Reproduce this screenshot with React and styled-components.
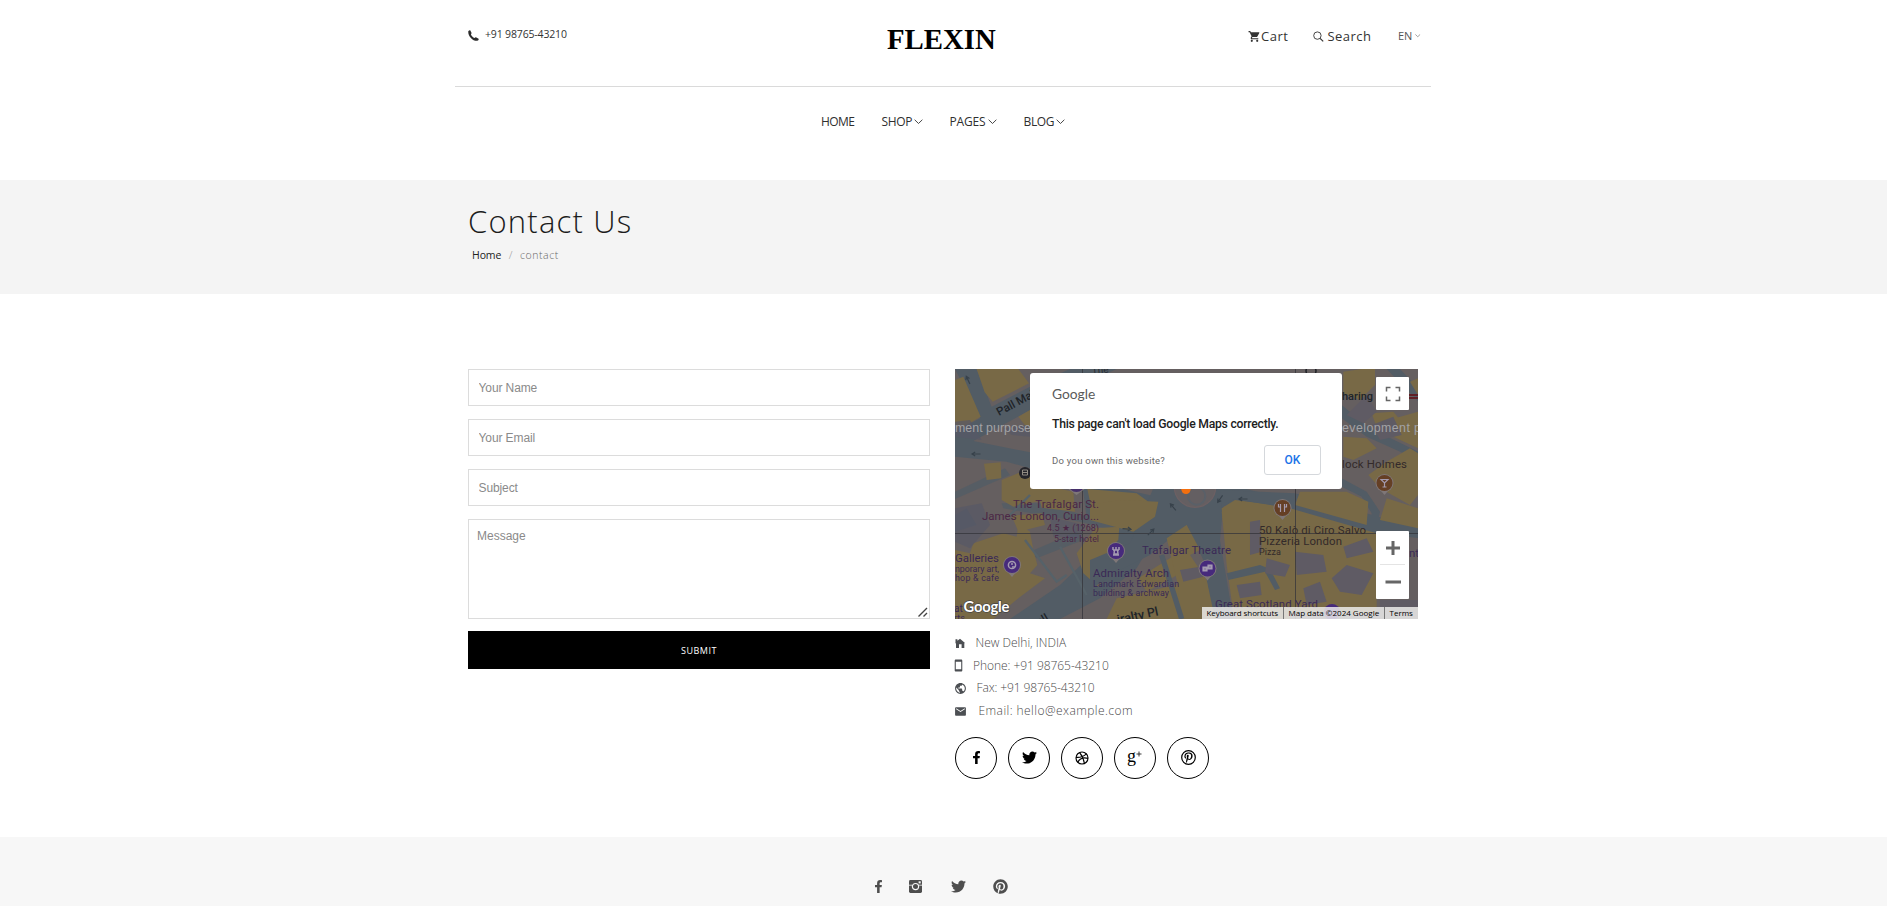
import React from "react";
import styled, { createGlobalStyle } from "styled-components";
import { MdShoppingCart, MdSmartphone, MdPublic, MdEmail } from "react-icons/md";
import { FaFacebookF, FaTwitter, FaPinterest, FaPinterestP } from "react-icons/fa";

const GlobalStyle = createGlobalStyle`
  * { box-sizing: border-box; }
  body {
    margin: 0;
    background: #fff;
    color: #333;
    font-family: "Open Sans", "Noto Sans", sans-serif;
    overflow: hidden;
  }
`;

const Page = styled.div`
  height: 906px;
  display: flex;
  flex-direction: column;
  overflow: hidden;
`;

const Container = styled.div`
  width: 951px;
  margin: 0 auto;
`;

const Txt = styled.span`
  font-size: ${(p) => p.$size || 12}px;
  font-weight: ${(p) => p.$weight || 400};
  letter-spacing: ${(p) => p.$ls || 0}px;
  color: ${(p) => p.$color || "inherit"};
  line-height: 16px;
  white-space: nowrap;
`;

/* ---------- header ---------- */

const Header = styled.header`
  height: 180px;
`;

const TopBar = styled.div`
  display: grid;
  grid-template-columns: 1fr 109px 1fr;
  height: 86px;
  align-items: start;
`;

const Phone = styled.div`
  display: flex;
  align-items: center;
  gap: 6px;
  padding-top: 26px;
  svg { margin-top: 3px; }
`;

const Logo = styled.div`
  padding-top: 23px;
  margin-left: -2px;
  font: 700 28.8px/33px "Liberation Serif", "Times New Roman", serif;
  color: #000;
  white-space: nowrap;
`;

const Tools = styled.div`
  justify-self: end;
  display: grid;
  grid-template-columns: 13px 51.5px 15px 70.5px 17px 6px;
  align-items: center;
  padding-top: 28px;
  margin-right: -2px;
`;

const Divider = styled.div`
  height: 1px;
  margin: 0 -12px 0 -13px;
  background: #dadada;
`;

const Nav = styled.nav`
  display: flex;
  padding: 27px 0 0 353px;
`;

const NavItem = styled.a`
  display: flex;
  align-items: center;
  gap: 2px;
  width: ${(p) => p.$w}px;
  color: #2f2f2f;
`;

/* ---------- title band ---------- */

const Band = styled.section`
  height: 114px;
  background: #f4f4f4;
`;

const Title = styled.h1`
  margin: 0;
  padding-top: 20px;
  font-size: 31px;
  font-weight: 300;
  line-height: 42px;
  letter-spacing: 1.2px;
  color: #1c1c1c;
`;

const Crumbs = styled.div`
  display: flex;
  gap: 7.5px;
  padding: 5px 0 0 4px;
`;

/* ---------- contact ---------- */

const Contact = styled(Container)`
  display: grid;
  grid-template-columns: 462px 463px;
  column-gap: 25px;
  padding-top: 75px;
  height: 543px;
`;

const Form = styled.form`
  display: flex;
  flex-direction: column;
  gap: 13px;
`;

const Input = styled.input`
  height: 37px;
  width: 100%;
  padding: 0 9.5px;
  border: 1px solid #dcdcdc;
  outline: 0;
  font: 12px "Liberation Sans", Arial, sans-serif;
  letter-spacing: -0.1px;
  &::placeholder { color: #8a8a8a; }
`;

const MessageBox = styled.div`
  position: relative;
  height: 100px;
  svg { position: absolute; right: 2px; bottom: 2px; }
`;

const Message = styled.textarea`
  display: block;
  height: 100px;
  width: 100%;
  padding: 9px 8px;
  border: 1px solid #dcdcdc;
  outline: 0;
  resize: none;
  font: 12px "Liberation Sans", Arial, sans-serif;
  &::placeholder { color: #8a8a8a; }
`;

const Submit = styled.button`
  height: 38px;
  margin-top: -1px;
  border: 0;
  background: #000;
  color: #fff;
  font: 500 9px "Open Sans", sans-serif;
  letter-spacing: 0.5px;
`;

/* ---------- map ---------- */

const MapFrame = styled.div`
  position: relative;
  height: 250px;
  overflow: hidden;
  background: #66605f;
  > svg { display: block; }
`;

const Dialog = styled.div`
  position: absolute;
  left: 75px;
  top: 4px;
  width: 312px;
  height: 116px;
  padding: 13px 21px 0 22px;
  border-radius: 3px;
  background: #fff;
  font-family: Roboto, sans-serif;
`;

const DialogBrand = styled.div`
  font: 400 13.8px/16px Lato, sans-serif;
  color: #5a5a5a;
`;

const DialogText = styled.div`
  padding-top: 14px;
  font-size: 12.2px;
  font-weight: 500;
  line-height: 17px;
  letter-spacing: -0.24px;
  color: #212121;
  white-space: nowrap;
`;

const DialogFoot = styled.div`
  display: flex;
  justify-content: space-between;
  align-items: center;
  padding-top: 12px;
  font-size: 9.5px;
  letter-spacing: 0.26px;
  color: #6a6a6a;
`;

const OkButton = styled.button`
  width: 57px;
  height: 30px;
  border: 1px solid #d5d8dc;
  border-radius: 3px;
  background: #fff;
  color: #1a73e8;
  font: 500 12px Roboto, sans-serif;
`;

const Fullscreen = styled.div`
  position: absolute;
  left: 421px;
  top: 8px;
  width: 33px;
  height: 33px;
  background: #fff;
  border-radius: 1px;
`;

const ZoomBox = styled.div`
  position: absolute;
  left: 421px;
  top: 162px;
  width: 33px;
  height: 68px;
  background: #fff;
  border-radius: 1px;
`;

const Attribution = styled.div`
  position: absolute;
  right: 0;
  bottom: 0;
  height: 12px;
  display: flex;
  background: rgba(240, 240, 240, 0.82);
  color: #000;
`;

const Credit = styled.span`
  width: ${(p) => p.$w}px;
  padding-left: 4.5px;
  border-left: ${(p) => (p.$first ? "0" : "1px solid #777")};
  font-size: 8px;
  line-height: 12px;
  white-space: nowrap;
  letter-spacing: ${(p) => (p.$first ? -0.08 : 0)}px;
`;

/* ---------- details ---------- */

const Details = styled.ul`
  list-style: none;
  margin: 0;
  padding: 13px 0 0;
  color: #4a4a4a;
`;

const Detail = styled.li`
  display: grid;
  grid-template-columns: ${(p) => p.$indent}px auto;
  align-items: center;
  height: 22.6px;
  svg { width: 13px; height: 13px; margin-left: ${(p) => p.$pull || -1}px; color: #4c4f53; }
`;

const Socials = styled.div`
  display: flex;
  gap: 11px;
  padding-top: 14.6px;
`;

const Circle = styled.a`
  width: 42px;
  height: 42px;
  border: 1px solid #000;
  border-radius: 50%;
  display: flex;
  align-items: center;
  justify-content: center;
  color: #000;
`;

const GPlus = styled.span`
  display: flex;
  font: 18px/18px "Liberation Serif", serif;
  margin: -4px 0 0 -1px;
  svg { margin: 4px 0 0 0; }
`;

const Footer = styled.footer`
  flex: 1;
  display: grid;
  grid-template-columns: 37px 41.5px 42.5px 16px;
  align-items: start;
  padding: 41px 0 0 872px;
  background: #f7f7f7;
  color: #4e4e4e;
`;

const Centered = styled.span`
  display: flex;
  align-items: center;
  height: 16px;
`;

/* ---------- drawings ---------- */

const Caret = ({ s = 9, c = "#333" }) => (
  <svg width={s} height={s * 0.6} viewBox="0 0 10 6" fill="none" stroke={c} strokeWidth="1">
    <path d="M0.7 0.8 5 5 9.3 0.8" />
  </svg>
);

const Handset = () => (
  <svg width="11" height="11" viewBox="0 0 11 11" fill="#2c2c2c">
    <path d="M0.300 1.200C0.800 0.400 1.600 0 2.200 0.200L3.600 2.900C3.700 3.400 3.100 3.900 2.900 4.200C3.400 5.900 4.900 7.400 6.600 8.100C7 7.800 7.400 7.200 7.900 7.300L10.600 8.800C10.900 9.400 10.300 10.400 9.300 10.800C4.500 11.100 -0.200 6 0.300 1.200Z" />
  </svg>
);

const House = () => (
  <svg viewBox="0 0 13 13" fill="currentColor">
    <path d="M1.500 2.200H3.400V3.800L6 1.800 11 6 10.300 6.300V11H7.600V7.300H5V11H2V6.300H1.200L1.500 5.400Z" />
  </svg>
);

const Magnifier = () => (
  <svg width="11" height="11" viewBox="0 0 11 11" fill="none" stroke="#333">
    <circle cx="4.4" cy="4.6" r="3.7" strokeWidth=".9" />
    <path d="M7.100 7.300 10.200 10.400" strokeWidth="1.2" />
  </svg>
);

const Grip = () => (
  <svg width="10" height="10" stroke="#444" strokeWidth="1.4">
    <path d="M0.500 9.500 9 1M5.500 9.500 9 6" />
  </svg>
);

const Instagram = () => (
  <svg width="13" height="13" viewBox="0 0 13 13">
    <rect width="13" height="13" rx="1.4" fill="currentColor" />
    <path d="M0 5.2H3.4M9.6 5.2H13" stroke="#f7f7f7" strokeWidth=".8" />
    <circle cx="6.5" cy="6.6" r="3.1" fill="none" stroke="#f7f7f7" strokeWidth="1.2" />
    <rect x="9.6" y="1.3" width="2.1" height="2.1" fill="#f7f7f7" />
  </svg>
);

const Ball = () => (
  <svg width="14" height="14" viewBox="0 0 14 14" fill="none" stroke="currentColor" strokeWidth="1.15">
    <circle cx="7" cy="7" r="6" />
    <path d="M1 6.4C5 6.6 9 5.4 11.4 2.9M4.6 1.6C7 4.4 8.7 8 9.4 12.4M2.8 11.2C4.6 7.8 8.4 6.2 13 7.4" />
  </svg>
);

const PlusMark = () => (
  <svg width="6" height="6" viewBox="0 0 6 6" stroke="#222" strokeWidth=".9">
    <path d="M0.500 3H5.500M3 0.500V5.500" />
  </svg>
);

const PinRing = () => (
  <svg width="15" height="15" viewBox="0 0 15 15">
    <circle cx="7.5" cy="7.5" r="6.8" fill="none" stroke="currentColor" strokeWidth="1.2" />
    <FaPinterestP x="2" y="2.200" size={11} />
  </svg>
);

const Y = "#786946";
const R = "#525c65";
const G = "#655f60";
const P = "#3a2956";

const Pin = ({ x, y, fill, children }) => (
  <g transform={`translate(${x} ${y})`}>
    <path d="M-8.5 2 0 12 8.5 2Z" fill="#7f7778" />
    <circle r="9" fill="#7f7778" />
    <circle r="8" fill={fill} />
    <g fill="none" stroke="#a49bb0" strokeWidth="1.5">{children}</g>
  </g>
);

const Arrow = ({ x, y, a }) => (
  <path
    transform={`translate(${x} ${y}) rotate(${a})`}
    d="M-4.500 0H4M0.8 -2 4 0 0.8 2"
    fill="none"
    stroke="#38424b"
    strokeWidth="1.2"
  />
);

const MapDrawing = () => (
  <svg width="463" height="250" viewBox="0 0 463 250" fontFamily="Roboto, sans-serif">
    <rect width="463" height="250" fill={G} />
    {/* western blocks */}
    <g transform="translate(-5 -4) scale(.33333)">
      <g fill={R}>
        <path d="M15 12H80L125 125 240 65 360 12H500L250 130 70 228 240 262 400 345 640 400 660 440 560 610 450 700 330 762H180L330 660 440 555 500 480 410 462 400 380 240 310 170 290 15 275V200L90 160Z" />
        <path d="M15 380 165 310 180 330 15 402ZM155 415H280L400 450 540 485 520 505 390 470 160 430ZM240 560 380 500 400 525 260 580ZM15 450 50 430 80 480 15 500Z" opacity=".8" />
      </g>
      <g fill={Y}>
        <path d="M15 45 40 35 92 155 40 185 15 190ZM80 12H205L237 55 128 110 104 82ZM205 155 240 135V200ZM102 296 152 292 154 340 110 345ZM155 345 235 312 300 365 370 380 375 440 275 428 270 408 190 425 155 405Z" />
        <path d="M412 372 560 385 622 430 580 478 430 456ZM185 452 275 445 285 480 205 500ZM15 555 60 565 70 535 160 505 200 515 205 475 240 500 250 555 262 600 240 625 285 640 205 700 130 762H15ZM380 565 435 490 508 485 505 525 470 560 505 570 470 630 445 665 400 625ZM500 700 720 650V762H470ZM565 640 690 560 700 620 590 680Z" />
      </g>
      <g fill="#575967">
        <path d="M15 170 60 165 95 225 15 215ZM160 190 240 180V215L185 210ZM15 430 95 415 120 480 60 550 15 530ZM300 455 400 480 395 520 310 515Z" opacity=".7" />
      </g>
      <path d="M330 545 410 690M225 525 320 650 350 630M240 390 180 450" fill="none" stroke="#566269" strokeWidth="7" />
    </g>
    {/* roundabout and theatre block */}
    <g transform="translate(135 111) scale(.33333)">
      <path d="M190 25H460L600 60V130L400 75 390 180 430 417H370L340 240 290 135 180 225 90 270 0 330V240L120 190Z" fill={R} />
      <path d="M0 75 90 60 205 65 195 110 130 155 0 120ZM230 175 290 135 330 210 300 225 350 300 375 417H270L265 320ZM395 95 450 65 600 115V417H440L420 310Z" fill={Y} />
      <path d="M445 145 520 135 510 190 460 195ZM470 300 540 290 550 350 490 355ZM270 270 330 260 340 290 280 305Z" fill="#5f5b63" />
      <circle cx="315" cy="20" r="62" fill="#645f62" stroke="#6c6063" strokeWidth="4" />
      <circle cx="320" cy="48" r="26" fill="none" stroke="#5a6068" strokeWidth="6" />
      <circle cx="288" cy="28" r="14" fill="#f36f0f" />
      <path d="M215 225 275 417" stroke={R} strokeWidth="16" />
    </g>
    {/* eastern blocks */}
    <g transform="translate(225 -4) scale(.33333)">
      <path d="M125 430 165 405 320 425 590 500V745H160L140 600Z" fill={Y} />
      <g fill={R}>
        <path d="M120 375 345 385 720 490V520L590 505 330 430 160 402 125 430ZM485 120 570 190 715 260V285L560 215 485 160ZM485 340 560 380 600 440 590 490 570 490 575 445 545 395 485 365ZM620 12H660L715 70V110Z" />
        <path d="M140 625 240 600 270 612 300 670 285 675 255 620 145 645Z" />
      </g>
      <g fill={Y}>
        <path d="M490 20 545 12H585V60L540 105 490 85ZM575 145 640 140 665 170 600 215ZM645 160 714 140V250L640 215ZM490 215 560 220 590 250 520 285 490 275ZM620 290 690 250 714 265V390L690 420 600 370 565 330ZM360 380H500L565 410 560 480 345 420ZM620 400 714 430V490L600 465ZM690 50 714 40V90Z" />
      </g>
      <g fill="#5f5b64">
        <path d="M210 470 240 465 245 560 210 570ZM345 560 430 570 440 620 350 630ZM455 640 500 600 580 625 545 690 480 680ZM260 580 330 600 315 635 255 625ZM170 660 240 650 245 690 180 700ZM370 670 420 650 440 710 380 720ZM500 150 560 90 590 140 550 175ZM575 180 640 155 665 210 600 225ZM490 545 560 520 580 560 500 580ZM600 705H714V727H600Z" />
      </g>
    </g>
    <path d="M127.5 0V250M340.5 0V250M0 164.5H463" stroke="#34343a" strokeWidth="1" opacity=".75" />
    <Arrow x={13} y={11} a={-115} />
    <Arrow x={21} y={85} a={180} />
    <Arrow x={218} y={138} a={-130} />
    <Arrow x={172} y={160} a={5} />
    <Arrow x={196} y={163} a={-45} />
    <Arrow x={265} y={130} a={125} />
    <Arrow x={288} y={130} a={180} />
    <g fill="#a3a3a6" fontSize="12.4" fontFamily="Liberation Sans, sans-serif">
      <text x="0" y="63" textLength="76">ment purpose</text>
      <text x="387" y="63" textLength="79">evelopment p</text>
    </g>
    <g fontWeight="500" fill="#202429" fontSize="11.5">
      <text x="44" y="47" transform="rotate(-28 44 47)">Pall Mall</text>
      <text x="163" y="255" fontSize="12.5" transform="rotate(-12 163 255)">iralty Pl</text>
      <text x="84" y="257" transform="rotate(-30 84 257)">all</text>
      <text x="387" y="31" fontSize="11">haring</text>
    </g>
    <text x="137" y="5" fontSize="10" fill="#292d32" transform="rotate(-5 137 5)">The</text>
    <circle cx="70" cy="104" r="6" fill="#24242a" />
    <path d="M67.5 101H72.5V106H67.5ZM67.5 103.5H72.5" stroke="#918b83" fill="none" />
    <circle cx="356" cy="2" r="5" fill="none" stroke="#202127" strokeWidth="1.5" />
    <path d="M454 26H463M454 29H463" stroke="#611f25" strokeWidth="2" />
    <g fill="#4b2846" textAnchor="end" fontSize="11.4">
      <text x="144" y="139" textLength="86">The Trafalgar St.</text>
      <text x="144" y="151" textLength="117">James London, Curio...</text>
      <text x="144" y="162" fontSize="9" textLength="52">4.5 ★ (1268)</text>
      <text x="144" y="173" fontSize="8.8" textLength="45">5-star hotel</text>
    </g>
    <g fill={P} fontSize="11.4">
      <text x="0" y="193" textLength="44">Galleries</text>
      <text x="0" y="203" fontSize="8.8" textLength="44">nporary art,</text>
      <text x="0" y="212" fontSize="8.8" textLength="44">hop &amp; cafe</text>
      <text x="-1" y="243" fontSize="10">at</text>
      <text x="-1" y="252" fontSize="9">rts</text>
      <text x="138" y="208" textLength="76">Admiralty Arch</text>
      <text x="138" y="218" fontSize="8.8" textLength="86">Landmark Edwardian</text>
      <text x="138" y="227" fontSize="8.8" textLength="76">building &amp; archway</text>
      <text x="187" y="185" textLength="89">Trafalgar Theatre</text>
      <text x="260" y="239" textLength="103">Great Scotland Yard</text>
      <text x="454" y="188">nt</text>
    </g>
    <g fill="#332a2a" fontSize="11.4">
      <text x="387" y="99" textLength="65">lock Holmes</text>
      <text x="304" y="165" textLength="107">50 Kalò di Ciro Salvo</text>
      <text x="304" y="176" textLength="83">Pizzeria London</text>
      <text x="304" y="186" fontSize="9" textLength="22">Pizza</text>
    </g>
    <path d="M112 119H131L121.500 126Z" fill="#7f7778" />
    <circle cx="121.500" cy="115" r="8" fill="#46306a" />
    <Pin x={57} y={196} fill="#472a7c">
      <circle r="3.6" />
      <path d="M-1 -1H1M0 2H3" />
    </Pin>
    <Pin x={161} y={182} fill="#472a7c">
      <path d="M-3 4H3M-2 3-1.500 -1H1.500L2 3ZM-3 -1V-4M0 -1V-4M3 -1V-4M-3 -1H3" />
    </Pin>
    <Pin x={252.500} y={199.500} fill="#472a7c">
      <path d="M-4 -1H-1V2H-4ZM1 -3H4V0H1Z" strokeWidth="2.2" />
    </Pin>
    <Pin x={327.500} y={139} fill="#653f25">
      <path d="M-2 -4V4M2 -4V4M-4 -4V-1H-2M4 -4V-1H2" strokeWidth="1.2" />
    </Pin>
    <Pin x={429.500} y={114} fill="#653f25">
      <path d="M-3.500 -3.500H3.500L0 0ZM0 0V4M-2 4H2" strokeWidth="1.2" />
    </Pin>
    <circle cx="377" cy="243" r="8" fill="#472a7c" />
    <text x="8.500" y="243" fontFamily="Lato, sans-serif" fontSize="14.8" fontWeight="700" fill="#fff" stroke="#444" strokeWidth="1.4" paintOrder="stroke" textLength="46">Google</text>
  </svg>
);

const credits = [
  { text: "Keyboard shortcuts", w: 81, first: true },
  { text: "Map data ©2024 Google", w: 101 },
  { text: "Terms", w: 34 },
];

const details = [
  { Icon: House, text: "New Delhi, INDIA", indent: 20.5, ls: 0 },
  { Icon: MdSmartphone, text: "Phone: +91 98765-43210", indent: 18, ls: -0.05, pull: -3 },
  { Icon: MdPublic, text: "Fax: +91 98765-43210", indent: 21.500, ls: -0.12 },
  { Icon: MdEmail, text: "Email: hello@example.com", indent: 23.5, ls: 0.44 },
];

const nav = [
  { text: "HOME", w: 60.5, ls: -0.6 },
  { text: "SHOP", w: 68, ls: -0.35, menu: true },
  { text: "PAGES", w: 74, ls: -0.15, menu: true },
  { text: "BLOG", w: 50, ls: -0.35, menu: true },
];

export default function App() {
  return (
    <Page>
      <GlobalStyle />
      <Header>
        <Container>
          <TopBar>
            <Phone>
              <Handset />
              <Txt $size={10.5} $ls={-0.16}>+91 98765-43210</Txt>
            </Phone>
            <Logo>FLEXIN</Logo>
            <Tools>
              <MdShoppingCart size={13} />
              <Txt $size={13} $ls={0.5}>Cart</Txt>
              <Magnifier />
              <Txt $size={13} $ls={0.45}>Search</Txt>
              <Txt $size={11} $ls={-0.1} $color="#555">EN</Txt>
              <Caret s={5.5} c="#555" />
            </Tools>
          </TopBar>
          <Divider />
          <Nav>
            {nav.map((n) => (
              <NavItem key={n.text} $w={n.w}>
                <Txt $ls={n.ls}>{n.text}</Txt>
                {n.menu && <Caret />}
              </NavItem>
            ))}
          </Nav>
        </Container>
      </Header>

      <Band>
        <Container>
          <Title>Contact Us</Title>
          <Crumbs>
            <Txt $size={10.5} $ls={-0.1} $color="#222">Home</Txt>
            <Txt $size={11} $weight={300} $color="#999">/</Txt>
            <Txt $size={10.5} $weight={300} $ls={0.55} $color="#666">contact</Txt>
          </Crumbs>
        </Container>
      </Band>

      <Contact>
        <Form>
          <Input placeholder="Your Name" />
          <Input placeholder="Your Email" />
          <Input placeholder="Subject" />
          <MessageBox>
            <Message placeholder="Message" />
            <Grip />
          </MessageBox>
          <Submit type="button">SUBMIT</Submit>
        </Form>
        <div>
          <MapFrame>
            <MapDrawing />
            <Dialog>
              <DialogBrand>Google</DialogBrand>
              <DialogText>This page can't load Google Maps correctly.</DialogText>
              <DialogFoot>
                Do you own this website?
                <OkButton>OK</OkButton>
              </DialogFoot>
            </Dialog>
            <Fullscreen>
              <svg width="33" height="33" fill="none" stroke="#666" strokeWidth="1.5">
                <path d="M10.500 14.500V10.500H14.500M19.500 10.500H23.500V14.500M23.500 19.500V23.500H19.500M14.500 23.500H10.500V19.500" />
              </svg>
            </Fullscreen>
            <ZoomBox>
              <svg width="33" height="68" stroke="#666" strokeWidth="3">
                <path d="M10 17H24M17 10V24M9.500 51H25" />
                <path d="M4 33.500H29" stroke="#e4e4e4" strokeWidth="1" />
              </svg>
            </ZoomBox>
            <Attribution>
              {credits.map((c) => (
                <Credit key={c.text} $w={c.w} $first={c.first}>{c.text}</Credit>
              ))}
            </Attribution>
          </MapFrame>
          <Details>
            {details.map(({ Icon, text, indent, ls, pull }) => (
              <Detail key={text} $indent={indent} $pull={pull}>
                <Icon />
                <Txt $weight={300} $ls={ls}>{text}</Txt>
              </Detail>
            ))}
          </Details>
          <Socials>
            <Circle><FaFacebookF size={13} /></Circle>
            <Circle><FaTwitter size={15} /></Circle>
            <Circle><Ball /></Circle>
            <Circle><GPlus>g<PlusMark /></GPlus></Circle>
            <Circle><PinRing /></Circle>
          </Socials>
        </div>
      </Contact>

      <Footer>
        <Centered><FaFacebookF size={13} /></Centered>
        <Centered><Instagram /></Centered>
        <Centered><FaTwitter size={15} /></Centered>
        <Centered><FaPinterest size={15} /></Centered>
      </Footer>
    </Page>
  );
}
